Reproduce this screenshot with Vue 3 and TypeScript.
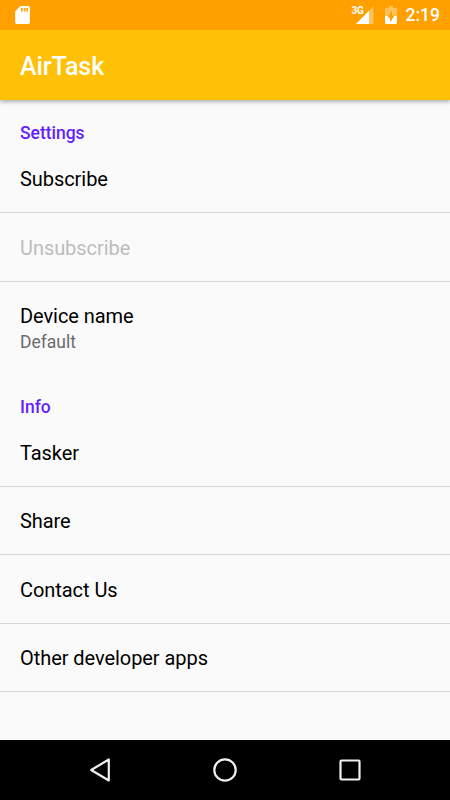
<script setup lang="ts">
interface Item {
  title: string
  summary?: string
  disabled?: boolean
}
interface Section {
  heading: string
  items: Item[]
}
const sections: Section[] = [
  {
    heading: 'Settings',
    items: [
      { title: 'Subscribe' },
      { title: 'Unsubscribe', disabled: true },
      { title: 'Device name', summary: 'Default' },
    ],
  },
  {
    heading: 'Info',
    items: [
      { title: 'Tasker' },
      { title: 'Share' },
      { title: 'Contact Us' },
      { title: 'Other developer apps' },
    ],
  },
]
</script>

<template>
  <div class="screen">
    <header class="status">
      <svg class="sd" width="16" height="20" viewBox="0 0 16 20">
        <path fill="#fff" fill-rule="evenodd" d="M5.500 1h7.700a1.700 1.700 0 0 1 1.700 1.700v14.600a1.700 1.700 0 0 1-1.700 1.700H1.900a1.700 1.700 0 0 1-1.700-1.700V6.300zM6 3v3.500h1.700V3zM8.700 3v3.500h1.700V3zM11.300 3v3.500H13V3z" />
      </svg>
      <div class="indicators">
        <span class="network">3G</span>
        <svg class="signal" width="18" height="18" viewBox="0 0 18 18">
          <path fill="#fff" fill-opacity=".35" d="M17.500 0v18H0z" />
          <path fill="#fff" d="M13 4.700V18H0z" />
        </svg>
        <svg class="battery" width="12" height="18" viewBox="0 0 12 18">
          <path fill="#fff" fill-opacity=".35" d="M4 0h4v2h3q1 0 1 1v7H0V3q0-1 1-1h3z" />
          <path fill="#fff" d="M0 10h12v7q0 1-1 1H1q-1 0-1-1z" />
          <path fill="#ffa000" d="M7 4.500v5h2.500L5 16.500v-5H2.500z" />
        </svg>
        <span class="clock">2:19</span>
      </div>
    </header>
    <div class="toolbar"><h1>AirTask</h1></div>
    <main>
      <section v-for="s in sections" :key="s.heading">
        <h2>{{ s.heading }}</h2>
        <ul>
          <li v-for="i in s.items" :key="i.title" :class="{ disabled: i.disabled, detailed: i.summary }">
            <span class="title">{{ i.title }}</span>
            <span v-if="i.summary" class="summary">{{ i.summary }}</span>
          </li>
        </ul>
      </section>
    </main>
    <nav>
      <svg width="24" height="28" viewBox="0 0 24 28"><path d="M20.800 3.500v21L3.200 14z" /></svg>
      <svg width="28" height="28" viewBox="0 0 28 28"><circle cx="14" cy="14" r="10.700" /></svg>
      <svg width="24" height="28" viewBox="0 0 24 28"><rect x="2.500" y="4.500" width="19" height="19" rx="1" /></svg>
    </nav>
  </div>
</template>

<style>
body {
  margin: 0;
}
</style>

<style scoped>
.screen {
  display: flex;
  flex-direction: column;
  width: 450px;
  height: 800px;
  overflow: hidden;
  background: #fafafa;
  font-family: Roboto, sans-serif;
  color: #000;
}
.status {
  display: flex;
  justify-content: space-between;
  flex: 0 0 30px;
  box-sizing: border-box;
  padding: 5px 10px 0 15px;
  background: #ffa000;
  color: #fff;
  z-index: 2;
}
.indicators {
  display: flex;
}
.network {
  font-size: 10px;
  line-height: 11px;
  font-weight: 700;
  letter-spacing: -0.3px;
}
.signal {
  margin: 1px 10.500px 0 -7.500px;
}
.battery {
  margin: 1px 9px 0 0;
}
.clock {
  font-size: 17.500px;
  line-height: 21px;
  font-weight: 500;
}
.toolbar {
  display: flex;
  align-items: center;
  flex: 0 0 70px;
  box-sizing: border-box;
  padding: 3px 20px 0;
  background: #ffc107;
  box-shadow: 0 2px 4px rgba(0, 0, 0, 0.3);
  z-index: 1;
}
h1 {
  margin: 0;
  font-size: 25px;
  line-height: 30px;
  font-weight: 500;
  letter-spacing: -0.1px;
  color: #fff;
}
main {
  flex: 1;
  padding-top: 21px;
}
h2 {
  margin: 0;
  padding-left: 20px;
  font-size: 17.500px;
  line-height: 24px;
  font-weight: 500;
  letter-spacing: -0.03px;
  color: #651fff;
}
ul {
  margin: 0;
  padding: 0;
  list-style: none;
}
li {
  display: flex;
  flex-direction: column;
  justify-content: center;
  box-sizing: border-box;
  height: 68.400px;
  padding: 2.200px 20px 0;
  border-bottom: 1px solid #d6d6d6;
}
.detailed {
  height: 112.800px;
  justify-content: flex-start;
  padding-top: 21px;
  border: 0;
}
.disabled {
  color: #bdbdbd;
}
.title {
  font-size: 20px;
  line-height: 27px;
  letter-spacing: -0.06px;
}
.summary {
  font-size: 17.500px;
  line-height: 24px;
  color: #6b6b6b;
}
nav {
  display: flex;
  justify-content: center;
  align-items: center;
  gap: 99px;
  flex: 0 0 60px;
  background: #000;
}
nav svg {
  fill: none;
  stroke: #f0f0f0;
  stroke-width: 2.200;
  stroke-linejoin: round;
}
</style>
